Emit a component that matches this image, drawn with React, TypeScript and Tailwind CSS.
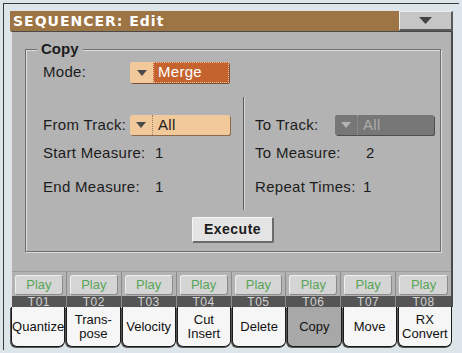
import React from "react";

const Tri = ({ color = "#4a4a4a" }: { color?: string }) => (
  <svg width="10" height="6" viewBox="0 0 10 6">
    <path d="M0 0H10L5 6Z" fill={color} />
  </svg>
);

const tracks = ["T01", "T02", "T03", "T04", "T05", "T06", "T07", "T08"];
const tabs: { label: string[]; active?: boolean }[] = [
  { label: ["Quantize"] },
  { label: ["Trans-", "pose"] },
  { label: ["Velocity"] },
  { label: ["Cut", "Insert"] },
  { label: ["Delete"] },
  { label: ["Copy"], active: true },
  { label: ["Move"] },
  { label: ["RX", "Convert"] },
];

const Row = ({ label, width, value }: { label: string; width: string; value: string }) => (
  <div className="flex h-[20px] items-center">
    <span className={width}>{label}</span>
    <span>{value}</span>
  </div>
);

export default function App() {
  return (
    <div
      className="h-[353px] w-[462px] overflow-hidden bg-[#dce6ea] p-[3px] text-[15px] tracking-[0.3px] text-[#1c1c1c]"
      style={{ fontFamily: '"Liberation Sans", Arial, sans-serif' }}
    >
      <div className="flex h-full flex-col border-l border-t border-[#3a3a3a] pb-[2px] pl-[6px] pr-[6px] pt-[7px]">
        {/* title bar */}
        <div className="flex h-[20px]">
          <div
            className="flex flex-1 items-center bg-[#9d7443] pl-[3px] text-[14px] font-bold tracking-[1px] text-white"
            style={{ fontFamily: '"DejaVu Sans", Verdana, sans-serif' }}
          >
            SEQUENCER: Edit
          </div>
          <div className="flex w-[54px] items-center justify-center border-b-2 border-l border-r-2 border-t border-b-[#5a5a5a] border-l-[#eeeeee] border-r-[#5a5a5a] border-t-[#eeeeee] bg-[#c6c6c6]">
            <svg width="13" height="7" viewBox="0 0 13 7">
              <path d="M0 0H13L6.5 7Z" fill="#444" />
            </svg>
          </div>
        </div>

        {/* body */}
        <div className="flex h-[276px] flex-col border-l-2 border-r-2 border-t border-l-[#e2e2e2] border-r-[#4a4a4a] border-t-[#4a4a4a] bg-[#b3b3b3]">
          <div className="relative ml-[13px] mr-[10px] mt-[17px] flex h-[203px] flex-col border border-[#6e6e6e] shadow-[inset_1px_1px_0_#dcdcdc,1px_1px_0_#dcdcdc]">
            <span className="absolute left-[11px] top-[-10px] bg-[#b3b3b3] px-[4px] text-[15px] font-bold leading-[18px] tracking-normal">
              Copy
            </span>

            {/* mode */}
            <div className="mt-[12px] flex h-[21px] items-center pl-[17px]">
              <span className="w-[87px]">Mode:</span>
              <div className="flex h-[21px] w-[99px] rounded-[2px] shadow-[1px_1px_0_#7a5030]">
                <div className="flex w-[23px] items-center justify-center rounded-l-[2px] bg-[#f2c99b]">
                  <Tri />
                </div>
                <div className="flex flex-1 items-center border border-dotted border-[#f0c0a0] bg-[#c4632e] pl-[4px] text-white">
                  Merge
                </div>
              </div>
            </div>

            {/* two columns */}
            <div className="mt-[14px] flex h-[113px]">
              <div className="flex w-[217px] flex-col pl-[17px] pt-[18px]">
                <div className="flex h-[20px] items-center">
                  <span className="w-[87px]">From Track:</span>
                  <div className="flex h-[20px] w-[100px] rounded-[2px] bg-[#f2c99b] shadow-[1px_1px_0_#8a6a4a]">
                    <div className="flex w-[23px] items-center justify-center border-r border-dotted border-[#9a7a5a]">
                      <Tri />
                    </div>
                    <div className="flex items-center pl-[5px]">All</div>
                  </div>
                </div>
                <div className="mt-[8px]">
                  <Row label="Start Measure:" width="w-[112px]" value="1" />
                </div>
                <div className="mt-[14px]">
                  <Row label="End Measure:" width="w-[112px]" value="1" />
                </div>
              </div>
              <div className="flex flex-1 flex-col border-l border-[#5e5e5e] pl-[11px] pt-[18px] shadow-[inset_1px_0_0_#d4d4d4]">
                <div className="flex h-[20px] items-center">
                  <span className="w-[80px]">To Track:</span>
                  <div className="flex h-[20px] w-[99px] rounded-[2px] bg-[#777777] shadow-[1px_1px_0_#4e4e4e]">
                    <div className="flex w-[23px] items-center justify-center border-r border-dotted border-[#9a9a9a]">
                      <Tri color="#b4b4b4" />
                    </div>
                    <div className="flex items-center pl-[5px] text-[#adadad]">All</div>
                  </div>
                </div>
                <div className="mt-[8px]">
                  <Row label="To Measure:" width="w-[111px]" value="2" />
                </div>
                <div className="mt-[14px]">
                  <Row label="Repeat Times:" width="w-[108px]" value="1" />
                </div>
              </div>
            </div>

            {/* execute */}
            <div className="mt-[7px] flex justify-center">
              <div className="flex h-[26px] w-[82px] items-center justify-center rounded-[2px] border-b-2 border-l border-r-2 border-t border-b-[#6a6a6a] border-l-[#f6f6f6] border-r-[#6a6a6a] border-t-[#f6f6f6] bg-[#e4e4e4] text-[14px] font-bold tracking-[0.5px]">
                Execute
              </div>
            </div>
          </div>

          {/* play row + track strip */}
          <div className="mt-auto grid grid-cols-8 border-t border-[#9c9c9c]">
            {tracks.map((t, i) => (
              <div key={t} className={`flex flex-col ${i < 7 ? "border-r border-[#8c8c8c]" : ""}`}>
                <div className="flex h-[24px] px-[3px] pb-[1px] pt-[3px]">
                  <div className="flex flex-1 items-center justify-center rounded-[3px] border-b border-l border-r border-t border-b-[#8a8a8a] border-l-[#efefef] border-r-[#8a8a8a] border-t-[#efefef] bg-[#d5d5d5] text-[13px] tracking-normal text-[#58a558]">
                    Play
                  </div>
                </div>
                <div className="flex h-[11px] items-center justify-center bg-[#555555] text-[12px] leading-none tracking-[0.5px] text-[#d2d2d2]">
                  {t}
                </div>
              </div>
            ))}
          </div>
        </div>

        {/* tabs */}
        <div className="grid h-[40px] grid-cols-8 pl-[1px]">
          {tabs.map((tab) => (
            <div key={tab.label.join("")} className="flex pr-[1px]">
              <div
                className={`flex flex-1 flex-col items-center justify-center rounded-b-[6px] border border-t-0 border-[#1a1a1a] text-[13px] leading-[14px] tracking-normal text-[#111] shadow-[-1px_1px_0_#555] ${
                  tab.active ? "bg-[#a8a8a8]" : "bg-[#f6f6f6]"
                }`}
              >
                {tab.label.map((l) => (
                  <span key={l}>{l}</span>
                ))}
              </div>
            </div>
          ))}
        </div>
      </div>
    </div>
  );
}
